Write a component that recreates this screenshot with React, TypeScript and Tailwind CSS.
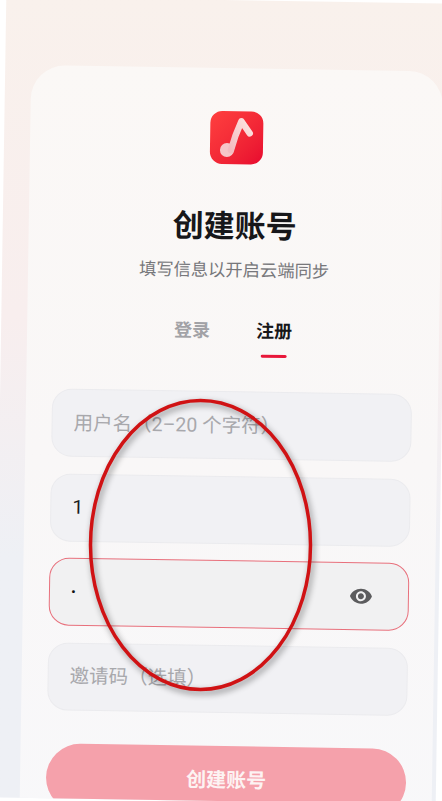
import { MdVisibility } from "react-icons/md";

const inputClass =
  "h-[68px] w-full rounded-[20px] border border-[#ebebee] bg-[#f1f1f4] px-[21px] text-[19.5px] text-[#1c1c1e] outline-none placeholder:text-[#a8a8ac]";

function Logo() {
  return (
    <div className="flex h-[53px] w-[53px] items-center justify-center rounded-[12px] bg-gradient-to-br from-[#ff3f3f] to-[#e8062f]">
      <svg width="53" height="53" viewBox="0 0 53 53" fill="none">
        <defs>
          <linearGradient id="note" x1="0" y1="1" x2="1" y2="0">
            <stop offset="0" stopColor="#f3bcc0" />
            <stop offset="1" stopColor="#fde3e0" />
          </linearGradient>
        </defs>
        <circle cx="17" cy="39" r="7" fill="#f6c6c8" />
        <path
          d="M21 39 C23 31 26.5 20 31 10 L39.5 22"
          stroke="url(#note)"
          strokeWidth="6.5"
          strokeLinecap="round"
          strokeLinejoin="round"
        />
      </svg>
    </div>
  );
}

export default function App() {
  return (
    <div className="relative h-[801px] w-[442px] overflow-hidden bg-white font-['Roboto','Noto_Sans_CJK_SC',sans-serif]">
      <div className="h-[801px] w-[442px] rotate-[0.9deg] overflow-hidden bg-gradient-to-b from-[#f9f1ec] via-[#f8eeee] via-40% to-[#eef0f5] to-70% pl-[26px] pt-[68px]">
        <div className="flex h-[780px] w-[412px] flex-col items-center rounded-[34px] bg-gradient-to-b from-[#fbf8f6] via-[#f9f7f7] to-[#f8f8fa] px-[26px] pt-[43px]">
          <Logo />
          <h1 className="mt-[41px] text-[31px] font-bold leading-[44px] text-[#17171a]">创建账号</h1>
          <p className="mt-[9px] text-[17.3px] leading-[24px] text-[#77777b]">填写信息以开启云端同步</p>
          <div className="mt-[35px] flex gap-[45px]">
            <button className="flex w-[37px] flex-col items-center text-[18px] font-semibold leading-[28px] text-[#a2a2a6]">
              登录
            </button>
            <button className="flex w-[37px] flex-col items-center text-[18px] font-semibold leading-[28px] text-[#17171a]">
              注册
              <span className="mt-[9px] h-[3px] w-[26px] rounded-full bg-[#e8173a]" />
            </button>
          </div>
          <div className="mt-[34px] flex w-full flex-col gap-[16.5px]">
            <input readOnly className={inputClass} placeholder="用户名（2–20 个字符）" />
            <input readOnly className={inputClass} value="1" />
            <div className="relative">
              <input
                readOnly
                className="h-[68px] w-full rounded-[20px] border border-[#e8707c] bg-[#f1f1f2] px-[21px] text-[14px] text-[#111113] outline-none"
                value="•"
              />
              <MdVisibility className="absolute right-[36px] top-[22px] text-[24px] text-[#5c5c5e]" />
            </div>
            <input readOnly className={inputClass} placeholder="邀请码（选填）" />
          </div>
          <button className="mt-[33px] h-[68px] w-full shrink-0 rounded-full bg-[#f5a1ab] text-[20px] font-semibold text-[#fdf3f3]">
            创建账号
          </button>
        </div>
      </div>
      <svg
        className="absolute left-0 top-0 drop-shadow-[2px_3px_3px_rgba(0,0,0,0.45)]"
        width="442"
        height="801"
        viewBox="0 0 442 801"
        fill="none"
      >
        <ellipse cx="200.5" cy="545" rx="110" ry="144.5" stroke="#d01214" strokeWidth="3.5" />
      </svg>
    </div>
  );
}
